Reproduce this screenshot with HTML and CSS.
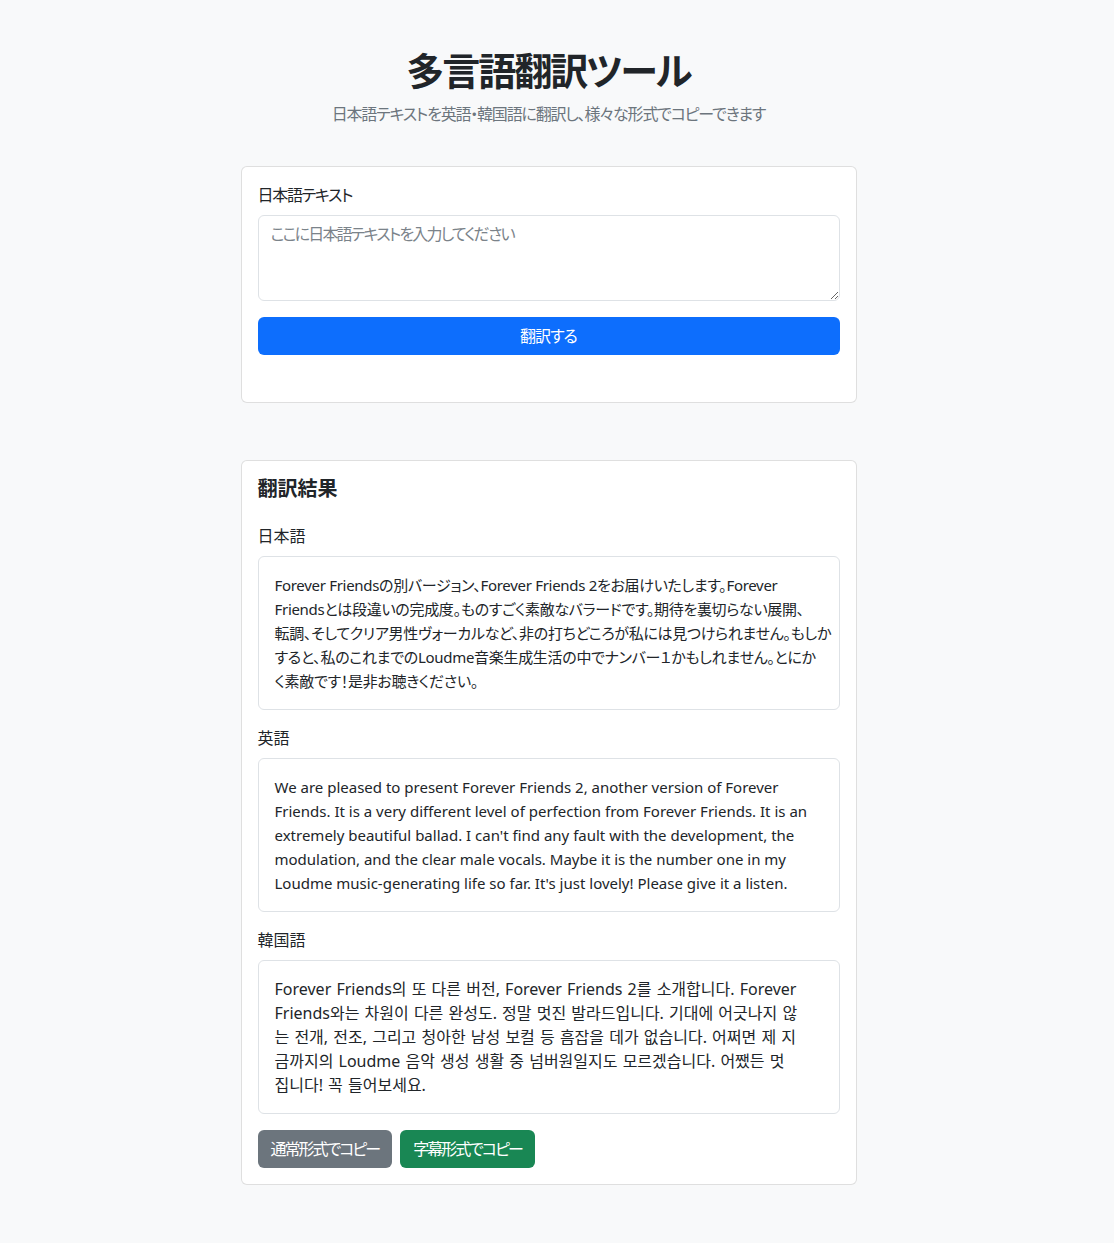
FILE: index.html
```html
<!DOCTYPE html>
<html lang="ja">
  <head>
    <meta charset="UTF-8" />
    <meta name="viewport" content="width=device-width, initial-scale=1.0" />
    <title>多言語翻訳ツール</title>
    <link rel="stylesheet" href="styles.css">
  </head>
  <body>
    <div class="container">
      <header class="page-header">
        <h1>多言語翻訳ツール</h1>
        <p class="lead">日本語テキストを英語・韓国語に翻訳し、様々な形式でコピーできます</p>
      </header>

      <div class="card input-card">
        <form id="form" action="/">
          <label for="source">日本語テキスト</label>
          <textarea id="source" name="source" rows="3" placeholder="ここに日本語テキストを入力してください"></textarea>
          <button type="submit" class="btn btn-primary btn-block">翻訳する</button>
        </form>
      </div>

      <div class="card result-card">
        <h5>翻訳結果</h5>

        <div class="result-block">
          <div class="result-label">日本語</div>
          <div class="result-text ja">Forever Friendsの別バージョン、Forever Friends 2をお届けいたします。Forever<br>Friendsとは段違いの完成度。ものすごく素敵なバラードです。期待を裏切らない展開、<br>転調、そしてクリア男性ヴォーカルなど、非の打ちどころが私には見つけられません。もしか<br>すると、私のこれまでのLoudme音楽生成生活の中でナンバー１かもしれません。とにか<br>く素敵です！是非お聴きください。</div>
        </div>

        <div class="result-block">
          <div class="result-label">英語</div>
          <div class="result-text en" lang="en">We are pleased to present Forever Friends 2, another version of Forever<br>Friends. It is a very different level of perfection from Forever Friends. It is an<br>extremely beautiful ballad. I can't find any fault with the development, the<br>modulation, and the clear male vocals. Maybe it is the number one in my<br>Loudme music-generating life so far. It's just lovely! Please give it a listen.</div>
        </div>

        <div class="result-block">
          <div class="result-label">韓国語</div>
          <div class="result-text ko" lang="ko">Forever Friends의 또 다른 버전, Forever Friends 2를 소개합니다. Forever<br>Friends와는 차원이 다른 완성도. 정말 멋진 발라드입니다. 기대에 어긋나지 않<br>는 전개, 전조, 그리고 청아한 남성 보컬 등 흠잡을 데가 없습니다. 어쩌면 제 지<br>금까지의 Loudme 음악 생성 생활 중 넘버원일지도 모르겠습니다. 어쨌든 멋<br>집니다! 꼭 들어보세요.</div>
        </div>

        <div class="copy-actions">
          <button type="button" class="btn btn-secondary">通常形式でコピー</button>
          <button type="button" class="btn btn-success">字幕形式でコピー</button>
        </div>
      </div>
    </div>
  </body>
</html>
```

FILE: styles.css
```css
* {
  box-sizing: border-box;
}

body {
  margin: 0 17px 0 0;
  background-color: #f8f9fa;
  color: #212529;
  font-family: "Noto Sans", "Noto Sans CJK JP", sans-serif;
  font-size: 16px;
  line-height: 1.5;
  font-feature-settings: "palt";
}

.container {
  width: 616px;
  margin: 0 auto;
  padding: 48px 0 140px 0;
}

.page-header {
  text-align: center;
  margin-bottom: 40px;
}

.page-header h1 {
  margin: 0 0 8px 0;
  font-size: 38px;
  font-weight: 700;
  line-height: 1.2;
  letter-spacing: -2px;
}

.page-header .lead {
  margin: 0;
  color: #6c757d;
  letter-spacing: -1.2px;
}

.card {
  background-color: #fff;
  border: 1px solid rgba(0, 0, 0, 0.125);
  border-radius: 6px;
  padding: 16px;
}

.input-card {
  padding-bottom: 47px;
  margin-bottom: 57px;
}

#form label {
  display: block;
  margin-bottom: 8px;
  letter-spacing: -1.3px;
}

#form textarea {
  display: block;
  width: 100%;
  height: 86px;
  padding: 6px 12px;
  margin-bottom: 16px;
  font: inherit;
  color: #212529;
  border: 1px solid #dee2e6;
  border-radius: 6px;
  resize: vertical;
  letter-spacing: -1.8px;
}

#form textarea::placeholder {
  color: #7b838a;
}

.btn {
  display: inline-block;
  padding: 6px 12px;
  font: inherit;
  line-height: 24px;
  color: #fff;
  border: 1px solid transparent;
  border-radius: 6px;
  cursor: pointer;
  letter-spacing: -2px;
}

.btn-block {
  display: block;
  width: 100%;
  letter-spacing: -1px;
}

.btn-primary {
  background-color: #0d6efd;
}

.btn-secondary {
  background-color: #6c757d;
}

.btn-success {
  background-color: #198754;
}

.result-card h5 {
  margin: 0 0 23px 0;
  font-size: 20px;
  font-weight: 700;
  line-height: 1.2;
}

.result-block {
  margin-bottom: 16px;
}

.result-label {
  margin-bottom: 8px;
}

.result-text {
  padding: 16px;
  border: 1px solid #dee2e6;
  border-radius: 6px;
  line-height: 24px;
  white-space: nowrap;
}

.result-text.ja {
  font-size: 15px;
  letter-spacing: -0.3px;
}

.result-text.en {
  font-size: 15px;
}

.result-text.ko {
  font-family: "Noto Sans", "Noto Sans CJK KR", sans-serif;
  word-spacing: 1px;
}

.copy-actions {
  display: flex;
  gap: 8px;
}
```
